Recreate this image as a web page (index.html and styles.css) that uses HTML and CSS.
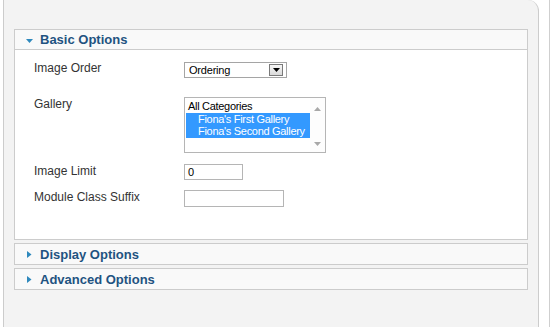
FILE: index.html
```html
<!DOCTYPE html>
<html>
<head>
<meta charset="utf-8">
<link rel="stylesheet" href="styles.css">
</head>
<body>
<div class="page">
  <div class="panel">
    <div class="pane open">
      <div class="pane-title">
        <svg class="arrow" width="7" height="7" viewBox="0 0 7 7"><polygon points="0,2 7,2 3.5,6" fill="#2f89bd"/></svg>
        <span>Basic Options</span>
      </div>
      <div class="pane-body">
        <div class="row r1">
          <div class="label">Image Order</div>
          <div class="select">
            <span class="select-text">Ordering</span>
            <span class="select-btn"><svg width="7" height="4" viewBox="0 0 7 4"><polygon points="0,0 7,0 3.5,4" fill="#000"/></svg></span>
          </div>
        </div>
        <div class="row r2">
          <div class="label">Gallery</div>
          <div class="listbox">
            <div class="options">
              <div class="opt">All Categories</div>
              <div class="opt sel sub">Fiona's First Gallery</div>
              <div class="opt sel sub">Fiona's Second Gallery</div>
            </div>
            <div class="scroll">
              <svg width="7" height="4" viewBox="0 0 7 4"><polygon points="0,4 7,4 3.5,0" fill="#a8a8a8"/></svg>
              <svg width="7" height="4" viewBox="0 0 7 4"><polygon points="0,0 7,0 3.5,4" fill="#a8a8a8"/></svg>
            </div>
          </div>
        </div>
        <div class="row r3">
          <div class="label">Image Limit</div>
          <div class="input short">0</div>
        </div>
        <div class="row r4">
          <div class="label">Module Class Suffix</div>
          <div class="input long"></div>
        </div>
      </div>
    </div>
    <div class="pane closed">
      <div class="pane-title">
        <svg class="arrow" width="7" height="7" viewBox="0 0 7 7"><polygon points="1,0 5.5,3.5 1,7" fill="#2f89bd"/></svg>
        <span>Display Options</span>
      </div>
    </div>
    <div class="pane closed">
      <div class="pane-title">
        <svg class="arrow" width="7" height="7" viewBox="0 0 7 7"><polygon points="1,0 5.5,3.5 1,7" fill="#2f89bd"/></svg>
        <span>Advanced Options</span>
      </div>
    </div>
  </div>
  <div class="divider"></div>
</div>
</body>
</html>
```

FILE: styles.css
```css
html, body {
  margin: 0;
  padding: 0;
  background: #ffffff;
  overflow: hidden;
}
body {
  font-family: "Liberation Sans", Arial, sans-serif;
  color: #333333;
}
.page {
  display: flex;
  align-items: flex-start;
  height: 327px;
}
.panel {
  box-sizing: border-box;
  margin-left: 3px;
  width: 536px;
  height: 327px;
  background: #f3f3f3;
  border: 1px solid #cccccc;
  border-top: none;
  border-bottom: none;
  border-top-right-radius: 11px;
  padding: 29px 10px 0 10px;
}
.divider {
  margin-left: 10px;
  width: 1px;
  height: 327px;
  background: #cfcfcf;
}
.pane {
  border: 1px solid #cccccc;
  background: #ffffff;
}
.pane + .pane {
  margin-top: 3px;
}
.pane-title {
  display: flex;
  align-items: center;
  height: 19px;
  padding-left: 11px;
  background: #f9f9f9;
  font-weight: bold;
  font-size: 13px;
  line-height: 19px;
  color: #1f5381;
}
.closed .pane-title {
  height: 20px;
  line-height: 21px;
}
.open .pane-title {
  border-bottom: 1px solid #cccccc;
}
.arrow {
  margin-right: 7px;
  flex: none;
}
.open .arrow {
  margin-top: 1px;
}
.pane-body {
  height: 177px;
  padding: 12px 0 0 19px;
  font-size: 12px;
}
.row {
  display: grid;
  grid-template-columns: 150px auto;
  align-items: start;
}
.label {
  line-height: 13px;
  color: #333333;
}
.r2 .label { padding-top: 1px; }
.r3 .label { padding-top: 1px; }
.r4 .label { padding-top: 1px; }
.r2 { margin-top: 19px; }
.r3 { margin-top: 11px; }
.r4 { margin-top: 10px; }

.select {
  box-sizing: border-box;
  width: 103px;
  height: 16px;
  border: 1px solid #a5a5a5;
  background: #fff;
  display: flex;
  align-items: center;
  justify-content: space-between;
  font-size: 11px;
  letter-spacing: -0.2px;
  color: #000;
}
.select-text {
  padding-left: 4px;
  line-height: 14px;
}
.select-btn {
  box-sizing: border-box;
  width: 14px;
  height: 12px;
  margin-right: 3px;
  border: 1px solid #7a7a7a;
  background: linear-gradient(#f6f6f6, #dadada);
  display: flex;
  align-items: center;
  justify-content: center;
}
.listbox {
  box-sizing: border-box;
  width: 142px;
  height: 56px;
  border: 1px solid #b5b5b5;
  background: #fff;
  display: flex;
  font-size: 11px;
  letter-spacing: -0.3px;
}
.options {
  width: 124px;
  padding: 2px 0 0 1px;
  overflow: hidden;
}
.opt {
  line-height: 13px;
  height: 12.5px;
  padding-left: 2px;
  color: #000;
  white-space: nowrap;
}
.opt.sub {
  padding-left: 12px;
}
.opt.sel {
  background: #3399ff;
  color: #ffffff;
}
.scroll {
  flex: 1;
  display: flex;
  flex-direction: column;
  align-items: center;
  justify-content: space-between;
  padding: 9px 0 6px 0;
  background: #fdfdfd;
}
.input {
  box-sizing: border-box;
  height: 16px;
  border: 1px solid #b5b5b5;
  background: #fff;
  font-size: 11px;
  line-height: 14px;
  padding-left: 3px;
  color: #000;
}
.input.short { width: 59px; }
.input.long { width: 100px; height: 17px; }
```
